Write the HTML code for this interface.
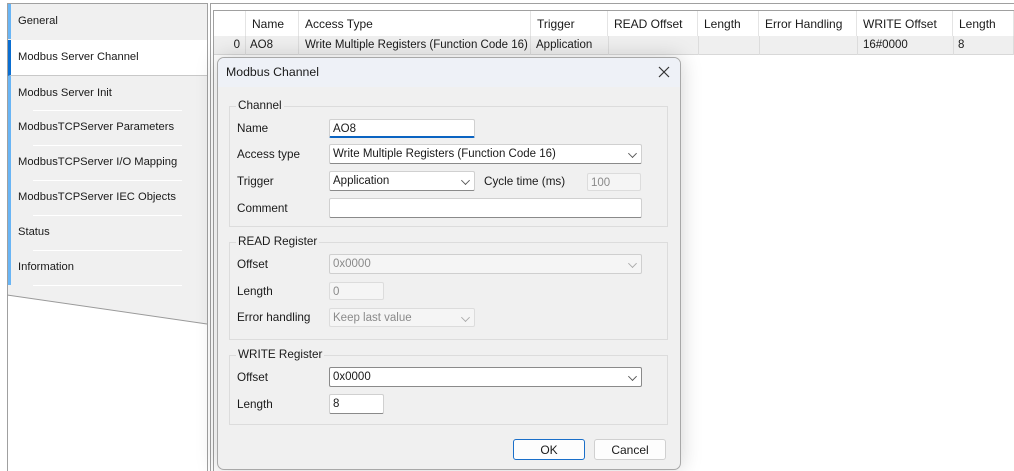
<!DOCTYPE html>
<html><head><meta charset="utf-8"><style>
*{box-sizing:border-box;margin:0;padding:0}
body{width:1014px;height:471px;overflow:hidden;background:#fff;font-family:"Liberation Sans",sans-serif;font-size:12px;color:#1a1a1a;position:relative}
.a{position:absolute}
.tab{position:absolute;left:8px;width:199px;height:35px;background:#f0f0f0;padding:11px 0 0 7px;border-left:3px solid #69b5f5;font-size:11.2px}
.sep{position:absolute;left:33px;width:149px;height:1px;background:#fff}
.th{position:absolute;top:11px;height:25px;padding-top:6px;padding-left:6px;border-right:1px solid #e4e4e4;font-size:12px}
.td{position:absolute;top:36px;height:19px;padding-top:3px;padding-left:6px;border-right:1px solid #dcdcdc;font-size:11.5px}
.lbl{position:absolute;left:237px;font-size:11.7px}
.inp{position:absolute;background:#fff;border:1px solid #d0d0d0;border-bottom:1px solid #8a8a8a;padding:3px 0 0 3px;font-size:11.5px;border-radius:2px}
.dis{background:#f5f5f5;color:#8a8a8a;border:1px solid #dcdcdc}
.chev{position:absolute;right:5px;top:5px;width:7px;height:7px;border-right:1px solid #555;border-bottom:1px solid #555;transform:rotate(45deg) scale(.9)}
.dis .chev{border-color:#aaa}
.grp{position:absolute;left:229px;width:439px;border:1px solid #dcdcdc}
.gl{position:absolute;left:236px;background:#f0f0f0;padding:0 2px;font-size:11.7px}
.btn{position:absolute;top:439px;width:72px;height:21px;background:#fdfdfd;border:1px solid #d0d0d0;border-radius:3px;text-align:center;padding-top:3px}
</style></head><body>
<div class="a" style="left:7px;top:3px;width:201px;height:468px;border-left:1px solid #a0a0a0;border-top:1px solid #a0a0a0"></div>
<div class="a" style="left:8px;top:4px;width:199px;height:292px;background:#f0f0f0"></div>
<svg class="a" style="left:7px;top:280px" width="201" height="50"><polygon points="1,0 200,0 200,44 1,15" fill="#f0f0f0"/><line x1="0" y1="15" x2="200" y2="44" stroke="#9a9a9a"/></svg>
<div class="tab" style="top:4px">General</div>
<div class="tab" style="top:40px;height:36px;background:#fff;border-left-color:#0a6ed1;border-bottom:1px solid #c8c8c8;padding-top:11px">Modbus Server Channel</div>
<div class="tab" style="top:76px">Modbus Server Init</div>
<div class="tab" style="top:110px">ModbusTCPServer Parameters</div>
<div class="tab" style="top:145px">ModbusTCPServer I/O Mapping</div>
<div class="tab" style="top:180px">ModbusTCPServer IEC Objects</div>
<div class="tab" style="top:215px">Status</div>
<div class="tab" style="top:250px">Information</div>
<div class="sep" style="top:110px"></div><div class="sep" style="top:145px"></div><div class="sep" style="top:180px"></div><div class="sep" style="top:215px"></div><div class="sep" style="top:250px"></div><div class="sep" style="top:285px"></div>
<div class="a" style="left:207px;top:3px;width:1px;height:468px;background:#a0a0a0"></div>
<div class="a" style="left:210px;top:3px;width:804px;height:1px;background:#a0a0a0"></div>
<div class="a" style="left:210px;top:3px;width:1px;height:468px;background:#a0a0a0"></div>
<div class="a" style="left:213px;top:10px;width:801px;height:1px;background:#a0a0a0"></div>
<div class="a" style="left:213px;top:10px;width:1px;height:461px;background:#a0a0a0"></div>
<div class="a" style="left:214px;top:36px;width:800px;height:19px;background:#efefef;border-bottom:1px solid #d8d8d8"></div>
<div class="th" style="left:214px;width:32px"></div>
<div class="th" style="left:246px;width:53px">Name</div>
<div class="th" style="left:299px;width:232px">Access Type</div>
<div class="th" style="left:531px;width:77px">Trigger</div>
<div class="th" style="left:608px;width:90px">READ Offset</div>
<div class="th" style="left:698px;width:61px">Length</div>
<div class="th" style="left:759px;width:98px">Error Handling</div>
<div class="th" style="left:857px;width:96px">WRITE Offset</div>
<div class="th" style="left:953px;width:61px">Length</div>
<div class="td" style="left:214px;width:32px;text-align:right;padding-right:5px">0</div>
<div class="td" style="left:246px;width:53px;padding-left:4px">AO8</div>
<div class="td" style="left:299px;width:232px">Write Multiple Registers (Function Code 16)</div>
<div class="td" style="left:531px;width:78px;padding-left:5px">Application</div>
<div class="td" style="left:609px;width:90px"></div>
<div class="td" style="left:699px;width:61px"></div>
<div class="td" style="left:760px;width:98px"></div>
<div class="td" style="left:858px;width:96px;padding-left:5px">16#0000</div>
<div class="td" style="left:954px;width:60px;padding-left:4px">8</div>
<div class="a" style="left:217px;top:57px;width:464px;height:413px;background:#f0f0f0;border:1px solid #a8a8a8;border-radius:7px;box-shadow:0 0 22px rgba(0,0,0,.18)"></div>
<div class="a" style="left:218px;top:58px;width:462px;height:29px;background:#eef1f7;border-radius:6px 6px 0 0"></div>
<div class="a" style="left:226px;top:65px;font-size:12.3px">Modbus Channel</div>
<svg class="a" style="left:658px;top:66px" width="12" height="12"><path d="M1 1L11 11M11 1L1 11" stroke="#333" stroke-width="1.2"/></svg>
<div class="grp" style="top:106px;height:121px"></div><div class="gl" style="top:99px">Channel</div>
<div class="lbl" style="top:122px">Name</div>
<div class="inp" style="left:329px;top:119px;width:146px;height:19px;border-bottom:2px solid #0a64c2">AO8</div>
<div class="lbl" style="top:148px">Access type</div>
<div class="inp" style="left:329px;top:144px;width:313px;height:20px">Write Multiple Registers (Function Code 16)<span class="chev"></span></div>
<div class="lbl" style="top:175px">Trigger</div>
<div class="inp" style="left:329px;top:171px;width:146px;height:20px">Application<span class="chev"></span></div>
<div class="a" style="left:484px;top:175px;font-size:11.7px">Cycle time (ms)</div>
<div class="inp dis" style="left:587px;top:173px;width:54px;height:18px">100</div>
<div class="lbl" style="top:202px">Comment</div>
<div class="inp" style="left:329px;top:198px;width:313px;height:20px"></div>
<div class="grp" style="top:242px;height:98px"></div><div class="gl" style="top:235px">READ Register</div>
<div class="lbl" style="top:258px">Offset</div>
<div class="inp dis" style="left:329px;top:254px;width:313px;height:20px;border-color:#cfcfcf">0x0000<span class="chev"></span></div>
<div class="lbl" style="top:285px">Length</div>
<div class="inp dis" style="left:329px;top:282px;width:55px;height:18px">0</div>
<div class="lbl" style="top:311px">Error handling</div>
<div class="inp dis" style="left:329px;top:308px;width:146px;height:19px">Keep last value<span class="chev"></span></div>
<div class="grp" style="top:355px;height:70px"></div><div class="gl" style="top:348px">WRITE Register</div>
<div class="lbl" style="top:371px">Offset</div>
<div class="inp" style="left:329px;top:367px;width:313px;height:20px;border-color:#8a8a8a">0x0000<span class="chev"></span></div>
<div class="lbl" style="top:398px">Length</div>
<div class="inp" style="left:329px;top:394px;width:55px;height:20px">8</div>
<div class="btn" style="left:513px;border:1px solid #1a6fc9">OK</div>
<div class="btn" style="left:594px">Cancel</div>
</body></html>
